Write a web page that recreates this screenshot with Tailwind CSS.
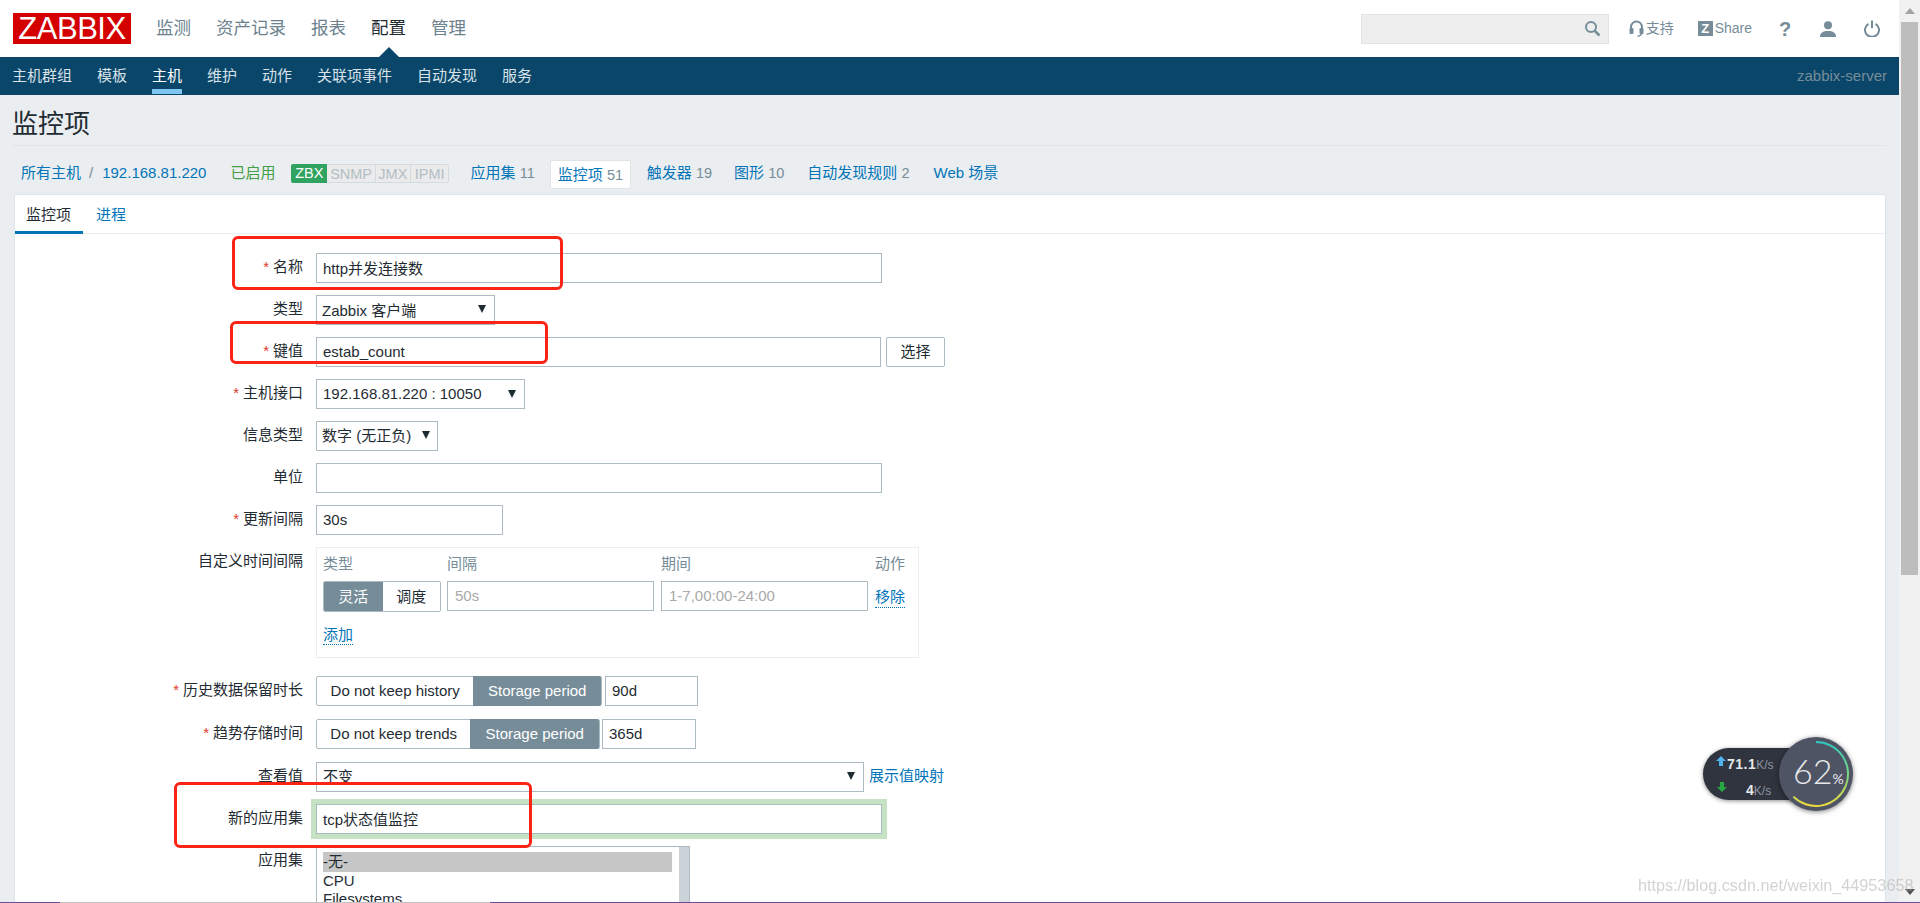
<!DOCTYPE html>
<html lang="zh">
<head>
<meta charset="utf-8">
<script src="https://cdn.jsdelivr.net/npm/@tailwindcss/browser@4"></script>
<title>监控项</title>
</head>
<body class="m-0 overflow-hidden">
<div class="relative flex w-[1920px] h-[903px] overflow-hidden bg-white text-[15px] text-[#1f2c33] font-['Liberation_Sans','Noto_Sans_CJK_SC',sans-serif]">

  <div class="w-[1899px] h-[903px] flex flex-col bg-[#ebeef0] overflow-hidden">
    <!-- top header -->
    <header class="relative h-[57px] shrink-0 bg-white flex items-center pl-[13px]">
      <div class="w-[118px] h-[31px] bg-[#d40000] text-white text-[31px] leading-[31px] text-center tracking-[-0.5px]">ZABBIX</div>
      <nav class="flex gap-[25px] ml-[25px] text-[17.5px] text-[#6c828e] -mt-[1px]">
        <a>监测</a><a>资产记录</a><a>报表</a><a class="relative text-[#1f2c33]">配置</a><a>管理</a>
      </nav>
      <div class="absolute left-[379px] top-[47px] w-0 h-0 border-l-[10px] border-r-[10px] border-b-[10px] border-l-transparent border-r-transparent border-b-[#0a466a]"></div>
      <div class="ml-auto flex items-center">
        <div class="w-[248px] h-[30px] bg-[#eeeeee] border border-[#e3e3e3] flex items-center justify-end pr-[7px]">
          <svg width="17" height="17" viewBox="0 0 17 17" fill="none" stroke="#768d99" stroke-width="2"><circle cx="7" cy="7" r="5"/><path d="M10.8 10.8 15.5 15.5" stroke-width="2.6"/></svg>
        </div>
        <div class="w-[20px]"></div>
        <svg width="15" height="17" viewBox="0 0 15 17" fill="none" stroke="#768d99" stroke-width="2"><path d="M2 11V7a5.5 5.5 0 0 1 11 0v4"/><rect x="0.5" y="8" width="4" height="6" rx="1" fill="#768d99" stroke="none"/><rect x="10.5" y="8" width="4" height="6" rx="1" fill="#768d99" stroke="none"/><path d="M12.5 13c0 2-1.500 3-4 3" stroke-width="1.4"/></svg>
        <span class="ml-[2px] text-[14px] text-[#768d99]">支持</span>
        <div class="ml-[24px] w-[15px] h-[15px] bg-[#768d99] text-white text-[13px] font-bold leading-[15px] text-center">Z</div>
        <span class="ml-[2px] text-[14px] text-[#768d99]">Share</span>
        <span class="ml-[27px] w-[12px] text-[20px] font-bold text-[#768d99] leading-none text-center">?</span>
        <svg class="ml-[29px]" width="16" height="16" viewBox="0 0 16 16" fill="#768d99"><circle cx="8" cy="4.2" r="4"/><path d="M0 16c0-4.2 3-6 8-6s8 1.800 8 6z"/></svg>
        <svg class="ml-[28px] mr-[19px]" width="16" height="17" viewBox="0 0 16 17" fill="none" stroke="#768d99" stroke-width="2"><path d="M4.500 3.800a7 7 0 1 0 7 0"/><path d="M8 0.500V8"/></svg>
      </div>
    </header>

    <!-- sub nav -->
    <div class="h-[38px] shrink-0 bg-[#0a466a] flex items-center pl-[12px] pr-[12px] text-[#d8e2e8]">
      <nav class="flex gap-[25px] h-full">
        <a class="leading-[37px]">主机群组</a><a class="leading-[37px]">模板</a>
        <a class="leading-[37px] text-white h-[37px] border-b-[5px] border-[#7fc5f2]">主机</a>
        <a class="leading-[37px]">维护</a><a class="leading-[37px]">动作</a><a class="leading-[37px]">关联项事件</a><a class="leading-[37px]">自动发现</a><a class="leading-[37px]">服务</a>
      </nav>
      <span class="ml-auto text-[#768d99]">zabbix-server</span>
    </div>

    <!-- title -->
    <div class="mx-[13px] h-[51px] shrink-0 border-b border-[#dfe4e7] flex items-center">
      <h1 class="text-[26px] font-normal leading-none -ml-px mt-[8px]">监控项</h1>
    </div>

    <!-- breadcrumb and host tabs -->
    <div class="h-[48px] shrink-0 flex items-center pl-[21px] pt-[7px] text-[#0275b8]">
      <a>所有主机</a><span class="ml-[8px] text-[#768d99]">/</span><a class="ml-[9px]">192.168.81.220</a>
      <span class="ml-[24px] text-[#429e47]">已启用</span>
      <div class="ml-[16px] flex h-[19px] text-[14.5px] leading-[18px] text-[#b3bec5] bg-[#ebebeb] border border-[#d4dbdf] rounded-[2px] w-[158px]">
        <span class="w-[36px] -ml-px -my-px h-[19px] bg-[#2fa35f] text-white text-center rounded-l-[2px]">ZBX</span>
        <span class="w-[49px] text-center border-r border-[#d4dbdf]">SNMP</span>
        <span class="w-[35px] text-center border-r border-[#d4dbdf]">JMX</span>
        <span class="w-[38px] text-center">IPMI</span>
      </div>
      <a class="ml-[21px]">应用集 <span class="text-[#768d99] text-[14.5px]">11</span></a>
      <a class="ml-[15px] mt-[1px] h-[29px] w-[81px] pl-[7px] leading-[27px] bg-white border border-[#dfe4e7] rounded-[2px]">监控项 <span class="text-[#768d99] text-[14.5px]">51</span></a>
      <a class="ml-[16px]">触发器 <span class="text-[#768d99] text-[14.5px]">19</span></a>
      <a class="ml-[22px]">图形 <span class="text-[#768d99] text-[14.5px]">10</span></a>
      <a class="ml-[23px]">自动发现规则 <span class="text-[#768d99] text-[14.5px]">2</span></a>
      <a class="ml-[24px]">Web 场景</a>
    </div>

    <!-- card -->
    <div class="ml-[14px] w-[1872px] flex-1 bg-white border-t border-l border-r border-[#dfe4e7] overflow-hidden">
      <div class="flex h-[39px] border-b border-[#ebeef0]">
        <a class="w-[68px] h-[39px] pl-[11px] pt-[10px] leading-[20px] border-b-[3px] border-[#0275b8]">监控项</a>
        <a class="ml-[13px] pt-[10px] leading-[20px] text-[#0275b8]">进程</a>
      </div>

      <form class="flex flex-col gap-[12px] pt-[19px]">
        <div class="flex">
          <label class="w-[301px] pr-[13px] text-right leading-[28px]"><span class="text-[#dc3a2c] mr-[4px]">*</span>名称</label>
          <input class="w-[566px] h-[30px] px-[6px] pb-[2px] border border-[#acbbc2] outline-none" value="http并发连接数">
        </div>
        <div class="flex">
          <label class="w-[301px] pr-[13px] text-right leading-[28px]">类型</label>
          <div class="w-[179px] h-[30px] pl-[5px] pr-[8px] border border-[#acbbc2] flex items-center justify-between"><span class="mt-[3px]">Zabbix 客户端</span><svg class="-mt-[2px]" width="8" height="8" viewBox="0 0 8 8" fill="#1f2c33"><path d="M0 0h8L4 8z"/></svg></div>
        </div>
        <div class="flex">
          <label class="w-[301px] pr-[13px] text-right leading-[28px]"><span class="text-[#dc3a2c] mr-[4px]">*</span>键值</label>
          <input class="w-[565px] h-[30px] px-[6px] pb-[2px] border border-[#acbbc2] outline-none" value="estab_count">
          <button type="button" class="ml-[5px] w-[59px] h-[30px] border border-[#acbbc2] rounded-[2px] bg-white">选择</button>
        </div>
        <div class="flex">
          <label class="w-[301px] pr-[13px] text-right leading-[28px]"><span class="text-[#dc3a2c] mr-[4px]">*</span>主机接口</label>
          <div class="w-[209px] h-[30px] pl-[6px] pr-[8px] border border-[#acbbc2] flex items-center justify-between"><span class="mt-[1px]">192.168.81.220 : 10050</span><svg width="8" height="8" viewBox="0 0 8 8" fill="#1f2c33"><path d="M0 0h8L4 8z"/></svg></div>
        </div>
        <div class="flex">
          <label class="w-[301px] pr-[13px] text-right leading-[28px]">信息类型</label>
          <div class="w-[122px] h-[30px] pl-[5px] pr-[7px] border border-[#acbbc2] flex items-center justify-between"><span class="mt-[1px]">数字 (无正负)</span><svg class="-mt-[2px]" width="8" height="8" viewBox="0 0 8 8" fill="#1f2c33"><path d="M0 0h8L4 8z"/></svg></div>
        </div>
        <div class="flex">
          <label class="w-[301px] pr-[13px] text-right leading-[28px]">单位</label>
          <input class="w-[566px] h-[30px] px-[6px] pb-[2px] border border-[#acbbc2] outline-none" value="">
        </div>
        <div class="flex">
          <label class="w-[301px] pr-[13px] text-right leading-[28px]"><span class="text-[#dc3a2c] mr-[4px]">*</span>更新间隔</label>
          <input class="w-[187px] h-[30px] px-[6px] pb-[2px] border border-[#acbbc2] outline-none" value="30s">
        </div>
        <div class="flex">
          <label class="w-[301px] pr-[13px] text-right leading-[28px]">自定义时间间隔</label>
          <div class="w-[603px] h-[111px] border border-[#ebeef0] pl-[6px]">
            <div class="flex h-[33px] items-center text-[#768d99]">
              <span class="w-[124px]">类型</span><span class="w-[214px]">间隔</span><span class="w-[214px]">期间</span><span>动作</span>
            </div>
            <div class="flex items-start">
              <div class="flex w-[118px] h-[31px] border border-[#acbbc2] rounded-[2px] overflow-hidden leading-[29px] text-center">
                <span class="w-[59px] bg-[#768d99] text-white -my-px leading-[31px]">灵活</span>
                <span class="w-[58px]">调度</span>
              </div>
              <input class="ml-[6px] w-[207px] h-[30px] px-[7px] pb-[2px] border border-[#acbbc2] outline-none placeholder:text-[#a9a9a9]" placeholder="50s">
              <input class="ml-[7px] w-[207px] h-[30px] px-[7px] pb-[2px] border border-[#acbbc2] outline-none placeholder:text-[#a9a9a9]" placeholder="1-7,00:00-24:00">
              <a class="ml-[7px] h-[27px] leading-[31px] text-[#0275b8] border-b border-dotted border-[#0275b8]">移除</a>
            </div>
            <a class="inline-block mt-[13px] h-[20px] leading-[20px] text-[#0275b8] border-b border-dotted border-[#0275b8]">添加</a>
          </div>
        </div>
        <div class="flex mt-[6px]">
          <label class="w-[301px] pr-[13px] text-right leading-[28px]"><span class="text-[#dc3a2c] mr-[4px]">*</span>历史数据保留时长</label>
          <div class="flex w-[286px] h-[30px] border border-[#acbbc2] rounded-[2px] leading-[28px] text-center">
            <span class="w-[157px]">Do not keep history</span>
            <span class="w-[128px] bg-[#768d99] text-white -my-px leading-[30px] rounded-r-[2px]">Storage period</span>
          </div>
          <input class="ml-[3px] w-[93px] h-[30px] px-[6px] pb-[2px] border border-[#acbbc2] outline-none" value="90d">
        </div>
        <div class="flex mt-[1px]">
          <label class="w-[301px] pr-[13px] text-right leading-[28px]"><span class="text-[#dc3a2c] mr-[4px]">*</span>趋势存储时间</label>
          <div class="flex w-[284px] h-[30px] border border-[#acbbc2] rounded-[2px] leading-[28px] text-center">
            <span class="w-[154px]">Do not keep trends</span>
            <span class="w-[129px] bg-[#768d99] text-white -my-px leading-[30px] rounded-r-[2px]">Storage period</span>
          </div>
          <input class="ml-[2px] w-[94px] h-[30px] px-[6px] pb-[2px] border border-[#acbbc2] outline-none" value="365d">
        </div>
        <div class="flex mt-[1px]">
          <label class="w-[301px] pr-[13px] text-right leading-[28px]">查看值</label>
          <div class="w-[548px] h-[30px] pl-[6px] pr-[8px] border border-[#acbbc2] flex items-center justify-between"><span class="mt-[1px]">不变</span><svg class="-mt-[2px]" width="8" height="8" viewBox="0 0 8 8" fill="#1f2c33"><path d="M0 0h8L4 8z"/></svg></div>
          <a class="ml-[5px] leading-[28px] text-[#0275b8]">展示值映射</a>
        </div>
        <div class="flex">
          <label class="w-[301px] pr-[13px] text-right leading-[28px]">新的应用集</label>
          <input class="w-[566px] h-[30px] px-[6px] pb-[2px] border border-[#acbbc2] outline-none shadow-[0_0_0_5px_#c5e2c4]" value="tcp状态值监控">
        </div>
        <div class="flex">
          <label class="w-[301px] pr-[13px] text-right leading-[28px]">应用集</label>
          <div class="relative w-[374px] h-[120px] border border-[#acbbc2] pt-[5px] pl-[6px] pr-[17px] leading-[19px]">
            <div class="h-[20px] bg-[#c6c6c6] leading-[20px]">-无-</div>
            <div class="h-[18px] leading-[18px]">CPU</div>
            <div class="h-[18px] leading-[18px]">Filesystems</div>
            <div class="absolute right-0 top-0 bottom-0 w-[10px] bg-[#cbd2d8]"></div>
          </div>
        </div>
      </form>
    </div>
  </div>

  <!-- page scrollbar -->
  <div class="relative w-[21px] h-[903px] bg-[#f1f1f1] flex flex-col items-center">
    <div class="mt-[8px] w-0 h-0 border-l-[5px] border-r-[5px] border-b-[6px] border-l-transparent border-r-transparent border-b-[#a3a3a3]"></div>
    <div class="mt-[8px] w-[17px] h-[553px] bg-[#bdbdbd]"></div>
    <div class="mt-auto mb-[8px] w-0 h-0 border-l-[5px] border-r-[5px] border-t-[6px] border-l-transparent border-r-transparent border-t-[#505050]"></div>
  </div>

  <!-- red annotation boxes drawn over the screenshot -->
  <div class="absolute left-[232px] top-[236px] w-[331px] h-[54px] border-[3px] border-[#fb2216] rounded-[6px]"></div>
  <div class="absolute left-[230px] top-[321px] w-[318px] h-[43px] border-[3px] border-[#fb2216] rounded-[6px]"></div>
  <div class="absolute left-[174px] top-[782px] w-[358px] h-[66px] border-[3px] border-[#fb2216] rounded-[6px]"></div>

  <!-- network speed widget -->
  <div class="absolute left-[1703px] top-[748px] w-[120px] h-[52px] rounded-full bg-[#2f343f] shadow-[0_1px_4px_rgba(0,0,0,0.45)] text-[#8f96a3] text-[12px] leading-none">
    <svg class="absolute left-[13px] top-[8px]" width="10" height="10" viewBox="0 0 10 10" fill="#4fb4ee"><path d="M5 0 10 5H7V10H3V5H0z"/></svg>
    <span class="absolute left-[24px] top-[9px]"><b class="text-[14px] text-[#e6e8ea] font-bold tracking-[0.5px]">71.1</b>K/s</span>
    <svg class="absolute left-[14px] top-[34px]" width="10" height="10" viewBox="0 0 10 10" fill="#27a844"><path d="M5 10 0 5H3V0H7V5H10z"/></svg>
    <span class="absolute left-[43px] top-[35px]"><b class="text-[14px] text-[#e6e8ea] font-bold">4</b>K/s</span>
  </div>
  <div class="absolute left-[1779px] top-[737px] w-[74px] h-[74px] rounded-full bg-[#4f5464] shadow-[0_1px_5px_rgba(0,0,0,0.5)]">
    <svg class="absolute inset-0" width="74" height="74" viewBox="-37 -37 74 74" fill="none">
      <defs><linearGradient id="arc" gradientUnits="userSpaceOnUse" x1="0" y1="-32" x2="0" y2="32"><stop offset="0" stop-color="#2ec9c0"/><stop offset="0.55" stop-color="#7fd67a"/><stop offset="1" stop-color="#f0dc3c"/></linearGradient></defs>
      <path d="M0 -32A32 32 0 1 1 -22.600 22.600" stroke="url(#arc)" stroke-width="2"/>
    </svg>
    <div class="absolute left-[14px] top-[17px] flex items-baseline text-[#e8e9ec] font-['Lato',sans-serif] font-light leading-none"><span class="text-[34px]">62</span><span class="text-[14px] font-normal">%</span></div>
  </div>

  <!-- watermark -->
  <div class="absolute left-[1638px] top-[875px] text-[16.2px] leading-[20px] text-[#a8a8a8]/50 blur-[0.5px] whitespace-nowrap">https://blog.csdn.net/weixin_44953658</div>

  <!-- bottom edge strip -->
  <div class="absolute left-0 right-0 bottom-0 h-px flex">
    <div class="w-[60px] bg-[#6a4da0]"></div>
    <div class="w-[430px] bg-[#c2c2c2]"></div>
    <div class="flex-1 bg-[#6a4da0]"></div>
  </div>
</div>
</body>
</html>
